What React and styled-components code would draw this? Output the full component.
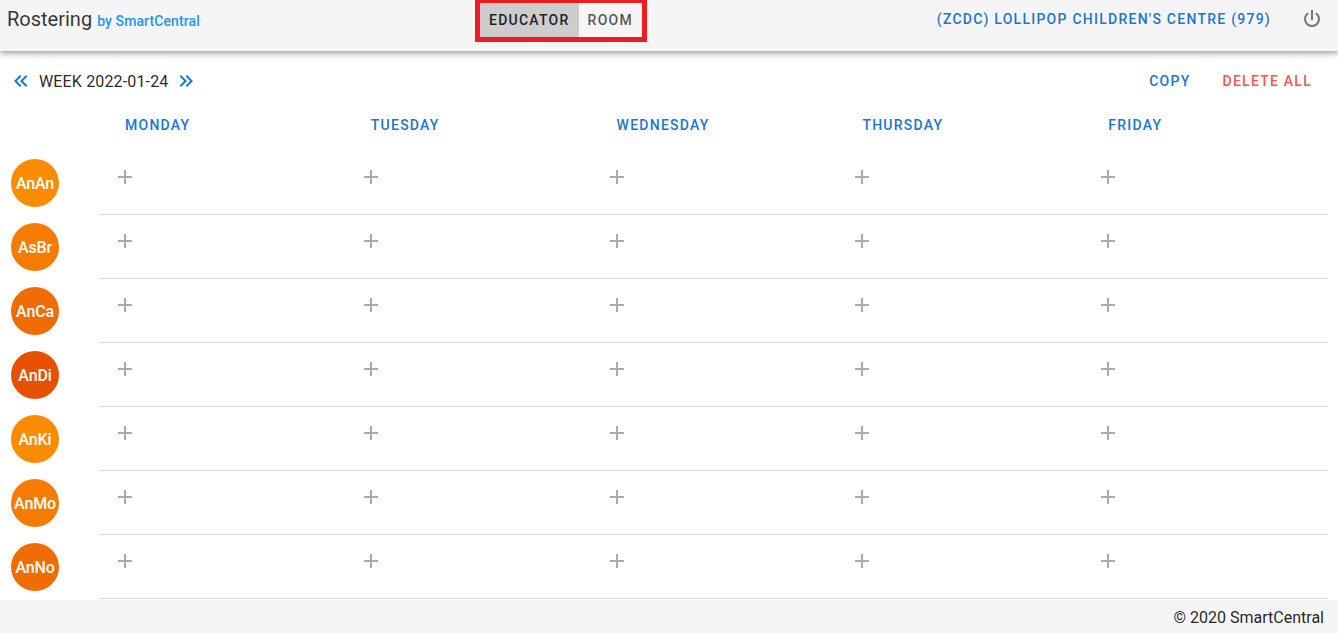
import React from 'react';
import styled, { createGlobalStyle } from 'styled-components';

const days = ['Monday', 'Tuesday', 'Wednesday', 'Thursday', 'Friday'];

const educators = [
  { initials: 'AnAn', color: '#fb8c00' },
  { initials: 'AsBr', color: '#f57c00' },
  { initials: 'AnCa', color: '#ef6c00' },
  { initials: 'AnDi', color: '#e65100' },
  { initials: 'AnKi', color: '#fb8c00' },
  { initials: 'AnMo', color: '#f57c00' },
  { initials: 'AnNo', color: '#ef6c00' },
];

const Icon = ({ d, size = 24, color }) => (
  <svg width={size} height={size} viewBox="0 0 24 24" fill={color} style={{ display: 'block' }}>
    <path d={d} />
  </svg>
);

const PLUS = 'M19,13H13V19H11V13H5V11H11V5H13V11H19V13Z';
const POWER = 'M16.56,5.44L15.11,6.89C16.84,7.94 18,9.83 18,12A6,6 0 0,1 12,18A6,6 0 0,1 6,12C6,9.83 7.16,7.94 8.88,6.88L7.44,5.44C5.36,6.88 4,9.28 4,12A8,8 0 0,0 12,20A8,8 0 0,0 20,12C20,9.28 18.64,6.88 16.56,5.44M13,3H11V13H13';
const DOUBLE_LEFT = 'M18.41,7.41L17,6L11,12L17,18L18.41,16.59L13.83,12L18.41,7.41M12.41,7.41L11,6L5,12L11,18L12.41,16.59L7.83,12L12.41,7.41Z';
const DOUBLE_RIGHT = 'M5.59,7.41L7,6L13,12L7,18L5.59,16.59L10.17,12L5.59,7.41M11.59,7.41L13,6L19,12L13,18L11.59,16.59L16.17,12L11.59,7.41Z';

export default function App() {
  return (
    <Page>
      <GlobalStyle />
      <Header>
        <TitleBlock>
          <Title>Rostering</Title>
          <Subtitle>by SmartCentral</Subtitle>
        </TitleBlock>
        <ToggleFrame>
          <ToggleButton $active>Educator</ToggleButton>
          <ToggleButton>Room</ToggleButton>
        </ToggleFrame>
        <CentreName>(ZCDC) Lollipop Children's Centre (979)</CentreName>
        <PowerButton>
          <Icon d={POWER} color="#757575" />
        </PowerButton>
      </Header>

      <Main>
        <WeekBar>
          <WeekNav>
            <Icon d={DOUBLE_LEFT} color="#1976d2" />
            <WeekLabel>WEEK 2022-01-24</WeekLabel>
            <Icon d={DOUBLE_RIGHT} color="#1976d2" />
          </WeekNav>
          <Actions>
            <TextButton $color="#1976d2">Copy</TextButton>
            <TextButton $color="#ff5252">Delete all</TextButton>
          </Actions>
        </WeekBar>

        <DayRow>
          {days.map((day) => (
            <DayCell key={day}>{day}</DayCell>
          ))}
        </DayRow>

        {educators.map((educator) => (
          <EducatorRow key={educator.initials}>
            <AvatarCell>
              <Avatar $color={educator.color}>{educator.initials}</Avatar>
            </AvatarCell>
            <RosterCells>
              {days.map((day) => (
                <RosterCell key={day}>
                  <Icon d={PLUS} color="#ababab" />
                </RosterCell>
              ))}
            </RosterCells>
          </EducatorRow>
        ))}
      </Main>

      <Footer>© 2020 SmartCentral</Footer>
    </Page>
  );
}

const GlobalStyle = createGlobalStyle`
  html, body {
    margin: 0;
    padding: 0;
    background: #fff;
    overflow: hidden;
  }
  * {
    box-sizing: border-box;
  }
`;

const Page = styled.div`
  display: flex;
  flex-direction: column;
  height: 633px;
  font-family: Roboto, "Liberation Sans", sans-serif;
  color: rgba(0, 0, 0, 0.87);
`;

const Header = styled.header`
  display: flex;
  align-items: flex-start;
  flex: none;
  height: 51px;
  padding: 0 14px 0 7px;
  background: #f5f5f5;
  box-shadow: 0 2px 4px -1px rgba(0, 0, 0, 0.2), 0 4px 5px 0 rgba(0, 0, 0, 0.14), 0 1px 10px 0 rgba(0, 0, 0, 0.12);
  position: relative;
`;

const TitleBlock = styled.div`
  display: flex;
  align-items: baseline;
  width: 468px;
  padding-top: 7px;
`;

const Title = styled.span`
  font-size: 20px;
  line-height: 24px;
  color: rgba(0, 0, 0, 0.8);
`;

const Subtitle = styled.span`
  margin-left: 5px;
  font-size: 14px;
  font-weight: 500;
  letter-spacing: 0.1px;
  color: #2196f3;
`;

const ToggleFrame = styled.div`
  display: flex;
  height: 42px;
  border: 5px solid #ed1c24;
  border-top-width: 3px;
  background: #f5f5f5;
`;

const ToggleButton = styled.div`
  display: flex;
  align-items: center;
  padding: 0 9px 0 9px;
  font-size: 14px;
  font-weight: 500;
  letter-spacing: 1.25px;
  text-transform: uppercase;
  color: rgba(0, 0, 0, ${(p) => (p.$active ? 0.87 : 0.67)});
  background: ${(p) => (p.$active ? '#cdcdcd' : 'transparent')};
`;

const CentreName = styled.div`
  margin-left: auto;
  padding-top: 12px;
  font-size: 14px;
  line-height: 15px;
  font-weight: 500;
  letter-spacing: 1.25px;
  text-transform: uppercase;
  color: #1976d2;
`;

const PowerButton = styled.div`
  margin-left: 29px;
  padding-top: 7px;
`;

const Main = styled.main`
  flex: 1;
  padding-right: 10px;
  overflow: hidden;
`;

const WeekBar = styled.div`
  display: flex;
  align-items: center;
  justify-content: space-between;
  height: 36px;
  margin-top: 12px;
  padding-left: 9px;
`;

const WeekNav = styled.div`
  display: flex;
  align-items: center;
`;

const WeekLabel = styled.span`
  margin: 0 6px;
  font-size: 16px;
  letter-spacing: 0.15px;
  color: rgba(0, 0, 0, 0.87);
`;

const Actions = styled.div`
  display: flex;
`;

const TextButton = styled.div`
  padding: 0 16px;
  font-size: 14px;
  line-height: 36px;
  font-weight: 500;
  letter-spacing: 1.25px;
  text-transform: uppercase;
  color: ${(p) => p.$color};
`;

const DayRow = styled.div`
  display: grid;
  grid-template-columns: repeat(5, 245.8px);
  height: 36px;
  margin: 8px 0;
  padding-left: 125px;
`;

const DayCell = styled.div`
  font-size: 14px;
  line-height: 36px;
  font-weight: 500;
  letter-spacing: 1.25px;
  text-transform: uppercase;
  color: #1976d2;
`;

const EducatorRow = styled.div`
  display: flex;
  height: 64px;
`;

const AvatarCell = styled.div`
  flex: none;
  width: 99px;
  padding: 8px 0 0 11px;
`;

const Avatar = styled.div`
  display: flex;
  align-items: center;
  justify-content: center;
  width: 48px;
  height: 48px;
  border-radius: 50%;
  background: ${(p) => p.$color};
  color: #fff;
  font-size: 16px;
  font-weight: 500;
  letter-spacing: -0.15px;
`;

const RosterCells = styled.div`
  display: grid;
  flex: 1;
  min-width: 0;
  grid-template-columns: repeat(5, 245.8px);
  padding: 14px 0 0 14px;
  border-bottom: 1px solid #e0e0e0;
  overflow: hidden;
`;

const RosterCell = styled.div`
  height: 24px;
`;

const Footer = styled.footer`
  flex: none;
  height: 33px;
  padding: 9px 14px 0 0;
  background: #f5f5f5;
  text-align: right;
  font-size: 16px;
  line-height: 18px;
`;
